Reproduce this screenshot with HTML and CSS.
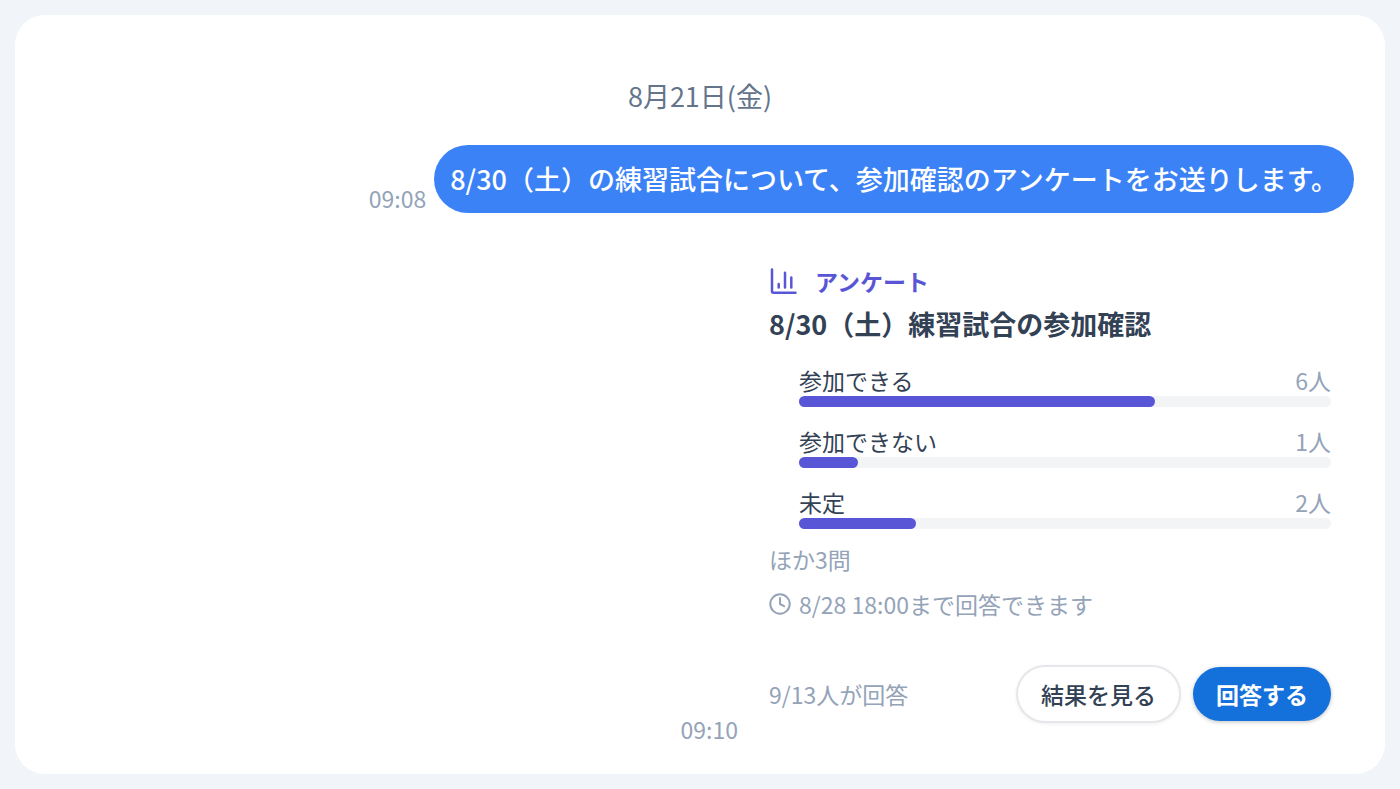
FILE: index.html
```html
<!DOCTYPE html>
<html lang="ja">
<head>
    <meta charset="UTF-8">
    <meta name="viewport" content="width=device-width, initial-scale=1.0">
    <title>アンケート</title>
    <link rel="stylesheet" href="styles.css">
</head>
<body>
    <main class="chat">
        <p class="chat-date">8月21日(金)</p>

        <div class="message">
            <time class="message-time">09:08</time>
            <p class="bubble">8/30（土）の練習試合について、参加確認のアンケートをお送りします。</p>
        </div>

        <div class="message">
            <time class="message-time">09:10</time>
            <section class="survey">
                <div class="survey-label">
                    <svg class="icon-chart" viewBox="0 0 28 28" aria-hidden="true">
                        <path d="M3 2.5V24.2Q3 25.7 4.5 25.7H26.5M9.7 17V20.5M16 5.7V20.5M22.3 10.5V20.5"/>
                    </svg>
                    <span>アンケート</span>
                </div>
                <h2 class="survey-title">8/30（土）練習試合の参加確認</h2>

                <ul class="options">
                    <li>
                        <div class="option-text"><span>参加できる</span><span class="count">6人</span></div>
                        <div class="bar"><div class="bar-fill" style="width: 67%"></div></div>
                    </li>
                    <li>
                        <div class="option-text"><span>参加できない</span><span class="count">1人</span></div>
                        <div class="bar"><div class="bar-fill" style="width: 11%"></div></div>
                    </li>
                    <li>
                        <div class="option-text"><span>未定</span><span class="count">2人</span></div>
                        <div class="bar"><div class="bar-fill" style="width: 22%"></div></div>
                    </li>
                </ul>

                <p class="note">ほか3問</p>
                <p class="note">
                    <svg class="icon-clock" viewBox="0 0 22 22" aria-hidden="true">
                        <circle cx="11" cy="11" r="9.7"/>
                        <path d="M11 5V11L15 13.2"/>
                    </svg>
                    <span>8/28 18:00まで回答できます</span>
                </p>

                <div class="survey-footer">
                    <span class="answered">9/13人が回答</span>
                    <button type="button" class="btn">結果を見る</button>
                    <button type="button" class="btn btn-primary">回答する</button>
                </div>
            </section>
        </div>
    </main>
</body>
</html>
```
FILE: styles.css
```css
* {
    box-sizing: border-box;
}

body {
    margin: 0;
    min-height: 100vh;
    padding: 15px 15px 16px;
    display: flex;
    background: #f1f5fa;
    color: #334155;
    font-family: "Noto Sans CJK JP", sans-serif;
    font-size: 23px;
    line-height: 30px;
}

p, h2, ul {
    margin: 0;
    padding: 0;
}

.chat {
    flex: 1;
    display: flex;
    flex-direction: column;
    gap: 30px;
    padding: 62px 31px 30px;
    border-radius: 30px;
    background: #fff;
}

.chat-date {
    text-align: center;
    font-size: 27px;
    line-height: 38px;
    color: #64748b;
}

.message {
    display: flex;
    justify-content: flex-end;
    align-items: flex-end;
    gap: 8px;
}

.message-time {
    color: #94a3b8;
}

.bubble {
    padding: 15px 16px;
    border-radius: 34px;
    background: #3b82f6;
    color: #fff;
    font-size: 27px;
    font-weight: 500;
    line-height: 38px;
}

/* Survey card */
.survey {
    width: 608px;
    padding: 23px;
}

.survey-label {
    display: flex;
    align-items: center;
    gap: 18px;
    color: #5856d6;
    font-weight: bold;
}

.survey-title {
    margin: 10px 0 24px;
    font-size: 27px;
    line-height: 36px;
}

.icon-chart,
.icon-clock {
    fill: none;
    stroke: currentColor;
    stroke-width: 2.5;
    stroke-linecap: round;
    stroke-linejoin: round;
}

.icon-chart {
    width: 28px;
    height: 28px;
}

.icon-clock {
    width: 22px;
    height: 22px;
    stroke-width: 2;
}

.options {
    display: flex;
    flex-direction: column;
    gap: 20px;
    padding-left: 30px;
    list-style: none;
}

.option-text {
    display: flex;
    justify-content: space-between;
    margin-bottom: 2px;
    line-height: 28px;
}

.count {
    color: #94a3b8;
}

.bar {
    height: 11px;
    border-radius: 6px;
    background: #f3f4f6;
}

.bar-fill {
    height: 100%;
    border-radius: 6px;
    background: #5856d6;
}

.note {
    display: flex;
    align-items: center;
    gap: 8px;
    margin-top: 15px;
    color: #94a3b8;
}

.survey-footer {
    display: flex;
    align-items: center;
    gap: 14px;
    margin-top: 48px;
}

.answered {
    margin-right: auto;
    color: #94a3b8;
}

.btn {
    padding: 12px 23px;
    border: 0;
    border-radius: 27px;
    background: #fff;
    color: #334155;
    font: inherit;
    font-weight: 500;
    box-shadow: 0 0 0 2px #e5e7eb, 0 1px 5px rgba(0, 0, 0, 0.15);
    cursor: pointer;
}

.btn-primary {
    background: #1471dc;
    color: #fff;
    font-weight: bold;
    box-shadow: 0 1px 4px rgba(0, 0, 0, 0.25);
}
```
